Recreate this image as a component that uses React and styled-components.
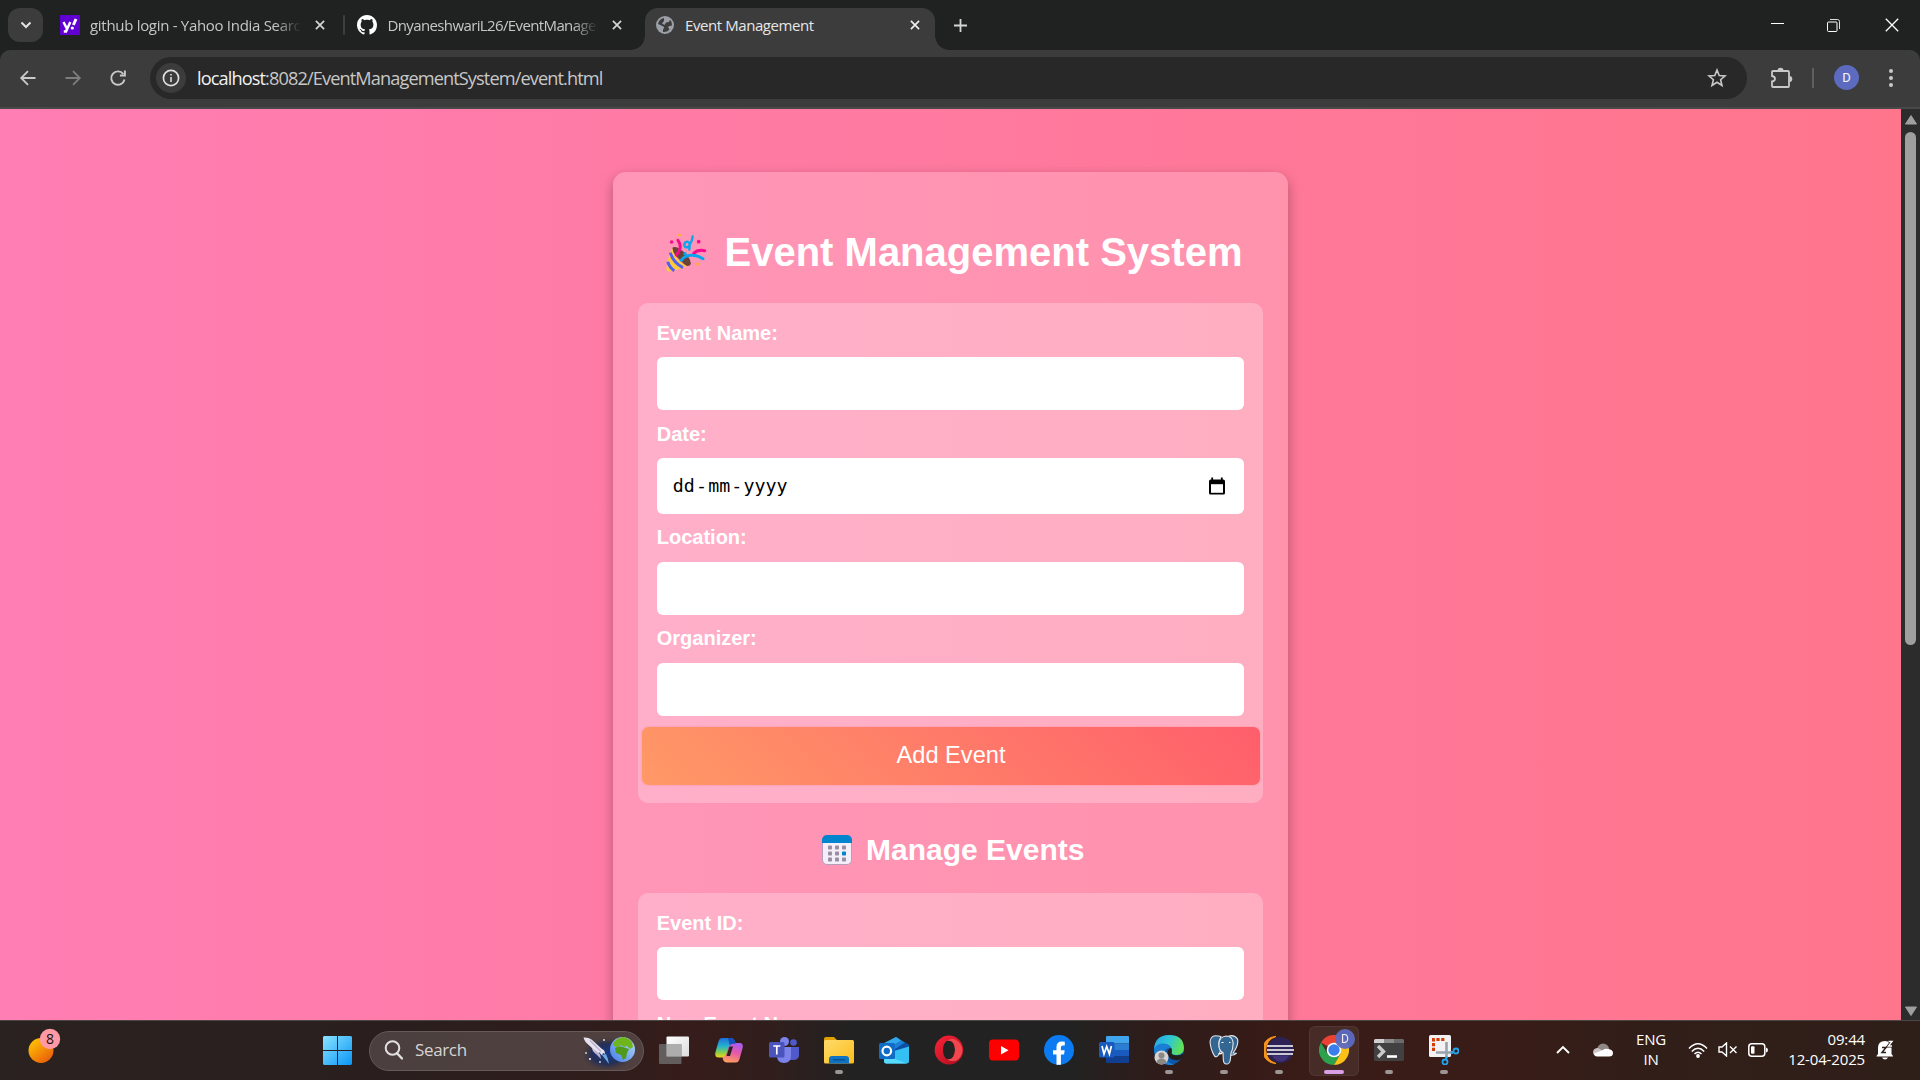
import React from "react";
import styled, { createGlobalStyle } from "styled-components";

const Global = createGlobalStyle`
  *, *::before, *::after { box-sizing: border-box; }
  body { margin: 0; background: #202221; overflow: hidden; }
`;
const ui = `"Open Sans", "Noto Sans", sans-serif`;
const arial = `"Liberation Sans", Arial, sans-serif`;

const Screen = styled.div`
  width: 1920px; height: 1080px; display: flex; flex-direction: column;
  font-family: ${ui}; overflow: hidden; background: #202221;
  svg { display: block; flex: none; }
`;

/* ---------- browser chrome ---------- */
const TabStrip = styled.div`
  height: 50px; flex: none; display: flex; padding-left: 8px; background: #202221;
`;
const TabSearch = styled.div`
  width: 35px; height: 34px; margin-top: 8px; border-radius: 12px; background: #3c3c3c;
  display: grid; place-items: center;
`;
const Tab = styled.div`
  width: ${(p) => p.$w}px; height: 42px; margin: 8px 0 0 ${(p) => p.$ml || 0}px;
  padding: 0 ${(p) => p.$pr || 15}px 8px ${(p) => p.$pl}px; display: flex; align-items: center; position: relative;
  color: ${(p) => (p.$active ? "#e6e6e6" : "#c5c7c6")};
  background: ${(p) => (p.$active ? "#3c3c3c" : "transparent")};
  border-radius: 13px 13px 0 0;
  ${(p) => p.$active && `
    &::before, &::after { content: ""; position: absolute; bottom: 0; width: 14px; height: 14px; }
    &::before { left: -14px; background: radial-gradient(circle at 0 0, transparent 13.5px, #3c3c3c 14px); }
    &::after { right: -14px; background: radial-gradient(circle at 100% 0, transparent 13.5px, #3c3c3c 14px); }
  `}
`;
const TabTitle = styled.span`
  flex: 1; min-width: 0; margin: 0 14px 0 ${(p) => p.$gap}px; font-size: 15px; line-height: 22px;
  letter-spacing: ${(p) => p.$ls}px; white-space: nowrap; overflow: hidden;
  ${(p) => p.$fade && `mask-image: linear-gradient(to right, #000 88%, transparent 100%);`}
`;
const TabDivider = styled.i`
  width: 2px; height: 20px; margin-top: 15px; background: #3d3f3e; border-radius: 1px;
`;
const NewTab = styled.div`
  width: 12px; height: 50px; margin-left: 19px; display: grid; place-items: center;
`;
const WindowButtons = styled.div`
  margin-left: auto; height: 50px; display: flex; align-items: center; gap: 43px; padding-right: 21px;
  svg:last-child { margin-left: 2px; }
`;
const Toolbar = styled.div`
  height: 59px; flex: none; display: flex; align-items: center; padding: 0 20px 2px 18px;
  background: #3c3c3c; border-bottom: 2px solid #494949; border-radius: 10px 10px 0 0;
`;
const NavIcons = styled.div`
  width: 132px; display: flex; gap: 25px;
`;
const Omnibox = styled.div`
  width: 1597px; height: 42px; border-radius: 21px; background: #282828; display: flex; align-items: center;
  padding: 0 20px 0 6px; margin-top: 1px;
`;
const SiteInfo = styled.div`
  width: 30px; height: 30px; border-radius: 50%; background: #3c3c3c; display: grid; place-items: center;
`;
const Url = styled.div`
  flex: 1; margin-left: 11px; font-size: 18.2px; line-height: 28px; letter-spacing: -0.9px; color: #c7c7c7;
  white-space: nowrap;
  b { font-weight: 400; color: #f1f1f1; }
`;
const BarActions = styled.div`
  flex: 1; display: flex; align-items: center; padding-left: 22px;
`;
const BarDivider = styled.i`
  width: 2px; height: 20px; background: #5f5f5f; margin: 0 20px 0 19px;
`;
const Avatar = styled.div`
  width: ${(p) => p.$size}px; height: ${(p) => p.$size}px; border-radius: 50%; background: #5c6bc0;
  color: #f4f5fb; font: ${(p) => p.$fs}px/${(p) => p.$size}px Roboto, sans-serif; text-align: center;
  margin-right: ${(p) => p.$mr || 0}px;
`;

/* ---------- web page ---------- */
const Viewport = styled.div`
  height: 911px; flex: none; display: flex; overflow: hidden;
`;
const Page = styled.main`
  width: 1901px; padding-top: 62.5px; overflow: hidden; font-family: ${arial}; color: #fff;
  background: linear-gradient(to right, #ff7eb3, #ff758c);
`;
const Card = styled.section`
  width: 675px; height: 1400px; margin: 0 auto; padding: 0 25px; border-radius: 12.5px;
  background: rgba(255, 255, 255, 0.2); box-shadow: 0 5px 12.5px rgba(0, 0, 0, 0.3);
`;
const Heading = styled.h1`
  margin: 0; height: ${(p) => p.$h}px; padding-top: ${(p) => p.$pt}px; font-size: ${(p) => p.$fs}px;
  line-height: 1.15; font-weight: 700; display: flex; justify-content: center; white-space: nowrap;
`;
const EmojiSlot = styled.span`
  width: ${(p) => p.$w}px; padding: ${(p) => p.$p};
`;
const Box = styled.form`
  padding: 18.5px 18.75px 18px; border-radius: 10px; background: rgba(255, 255, 255, 0.25);
`;
const Field = styled.div`
  margin-bottom: ${(p) => (p.$last ? 11 : 12.5)}px;
`;
const Label = styled.label`
  display: block; height: 23px; margin: ${(p) => (p.$raised ? "-1px 0 13.5px" : "0 0 12.5px")};
  font-size: 20px; line-height: 23px; font-weight: 700;
`;
const FieldBody = styled.div`
  display: flow-root;
`;
const Input = styled.div`
  height: ${(p) => p.$h || 53}px; border-radius: 6px; background: #fff; color: #000; display: flex;
  align-items: center; padding: 0 18px 0 16px; font: 18.3px/24px "DejaVu Sans Mono", monospace;
`;
const Segment = styled.span`
  padding: 0 0.6px 0 ${(p) => (p.$first ? 0 : 0.6)}px;
  &:last-of-type { margin-right: auto; }
`;
const AddButton = styled.div`
  height: 58px; margin: 0 -15px; border-radius: 6.5px; color: #fff; font-size: 23.6px; line-height: 56px;
  text-align: center; background: linear-gradient(45deg, #ff9966, #ff5e6c);
  box-shadow: 0 0 2px rgba(255, 110, 110, 0.5);
  margin: 0 -15.4px 0 -14.4px;
`;
const Scrollbar = styled.div`
  width: 19px; background: #2c2c2c; display: flex; flex-direction: column; align-items: center;
  padding: 6px 0 4px;
`;
const Thumb = styled.div`
  width: 11px; height: 513px; margin: 7px 0 auto; border-radius: 6px; background: #9f9f9f;
`;

/* ---------- taskbar ---------- */
const Taskbar = styled.footer`
  height: 60px; flex: none; display: flex; align-items: center; border-top: 1px solid #4c4644; color: #fff;
  background: linear-gradient(to right, #2a2220 0, #2a1f1e 400px, #2f1d1c 600px, #361c1a 690px, #301e1c 770px,
    #232222 850px, #222 1070px, #2e1c1a 1150px, #391b17 1300px, #391c17 1500px, #311e19 1640px, #2f1f19 1920px);
`;
const Weather = styled.div`
  width: 323px; padding: 0 0 2px 28px;
`;
const SearchBox = styled.div`
  width: 275px; height: 40px; margin: 0 2.5px 0 17px; border-radius: 20px; display: flex; align-items: center;
  padding: 0 7px 1px 14px; border: 1px solid #65595a; background: linear-gradient(to right, #4b403f, #50403f);
`;
const SearchText = styled.span`
  flex: 1; margin-left: 12px; font-size: 17px; line-height: 24px; letter-spacing: -0.35px; color: #d8d4d4;
`;
const AppSlot = styled.div`
  width: 55px; height: 59px; display: grid; place-items: center; grid-template-areas: "a";
  & > * { grid-area: a; }
  & > svg { margin-bottom: 1px; }
`;
const ActiveTile = styled.div`
  width: 50px; height: 50px; border-radius: 6px; background: rgba(255, 255, 255, 0.07);
  border: 1px solid rgba(255, 255, 255, 0.06);
`;
const Mark = styled.i`
  align-self: end; margin-bottom: 6px; width: ${(p) => (p.$on ? 20 : 8)}px; height: 4px; border-radius: 2px;
  background: ${(p) => (p.$on ? "#d99fe6" : "#9c9594")};
`;
const Badge = styled.div`
  align-self: start; margin: 8px 0 0 22px;
  & > div { opacity: 0.95; }
`;
const Tray = styled.div`
  flex: 1; display: flex; align-items: center; padding: 0 0 2px 84.5px;
`;
const TrayText = styled.div`
  width: ${(p) => p.$w}px; margin-left: ${(p) => p.$ml}px; font-size: 15px; line-height: 20px;
  letter-spacing: ${(p) => p.$ls}px; text-align: ${(p) => p.$align}; white-space: nowrap; padding-bottom: 2px;
`;
const Slot = styled.div`
  margin-left: ${(p) => p.$ml}px;
`;

const Svg = ({ w, h = w, vb, children, ...r }) => (
  <svg width={w} height={h} viewBox={vb || `0 0 ${w} ${h}`} fill="none" {...r}>{children}</svg>
);
const X = ({ c = "#d5d5d5" }) => (
  <Svg w={10}><path d="M.9.9l8.2 8.2M9.1.9L.9 9.1" stroke={c} strokeWidth="1.7" /></Svg>
);

const Popper = () => (
  <Svg w={42} h={40} vb="30 38 126 120">
    <path d="M52 82Q62 76 80 90Q104 106 108 130Q104 140 92 136L54 98Z" fill="#6b4236" />
    <path d="M51 83Q36 118 34 146Q35 156 46 153Q72 150 96 137Q62 122 51 83Z" fill="#ffc83d" />
    <path d="M46 97Q54 126 84 142M38 124Q44 142 58 151" stroke="#4f62ef" strokeWidth="9" />
    <path d="M69 60Q80 76 73 90Q70 96 64 104" stroke="#f70a8d" strokeWidth="9" strokeLinecap="round" />
    <path d="M116 99Q128 87 149 91" stroke="#f70a8d" strokeWidth="9" strokeLinecap="round" />
    <path d="M79 120Q88 106 106 105Q124 103 144 115" stroke="#0aa5ef" strokeWidth="9" strokeLinecap="round" />
    <path d="M113 48Q112 62 103 76Q98 84 90 79Q85 72 91 66Q98 61 103 68Q105 74 103 88" stroke="#0aa5ef" strokeWidth="7" strokeLinecap="round" />
    <circle cx="50" cy="65" r="5.500" fill="#f70a8d" /><circle cx="131" cy="64" r="5.500" fill="#f70a8d" />
    <circle cx="73" cy="44" r="4.500" fill="#ffb02e" /><circle cx="128" cy="131" r="4.500" fill="#ffb02e" />
    <circle cx="90" cy="100" r="5" fill="#0aa5ef" />
  </Svg>
);
const Calendar = () => (
  <Svg w={30}>
    <rect x=".5" y=".5" width="29" height="29" rx="4.5" fill="#f3eef8" stroke="#b59dbd" />
    <path d="M0 8V5a5 5 0 0 1 5-5h20a5 5 0 0 1 5 5v3z" fill="#0084ce" />
    {[10.5, 16.5, 22.5].map((y) => [6, 13, 20].map((x) => (
      <rect key={x + "-" + y} x={x} y={y} width="4" height="4" rx=".8" fill={x === 20 && y === 16.5 ? "#0084ce" : "#998ea3"} />
    )))}
  </Svg>
);

const TaskView = () => (
  <Svg w={30}>
    <rect x="7.5" y="1.500" width="22.500" height="20" rx="1" fill="url(#tv1)" />
    <rect x="0" y="9" width="22.500" height="20" rx="1" fill="#6f6f6f" fillOpacity=".8" />
    <path d="M7.500 9h15v12.500h-15z" fill="#adadad" />
    <defs><linearGradient id="tv1" x1="0" y1="0" x2="1" y2="1"><stop stopColor="#fff" /><stop offset="1" stopColor="#dcdcdc" /></linearGradient></defs>
  </Svg>
);
const Copilot = () => (
  <Svg w={30}>
    <defs>
      <linearGradient id="cp1" x1="0" y1="0" x2="0" y2="1"><stop stopColor="#1b6fe0" /><stop offset=".45" stopColor="#28b6c8" /><stop offset=".75" stopColor="#8ccf45" /><stop offset="1" stopColor="#f5d31c" /></linearGradient>
      <linearGradient id="cp2" x1=".6" y1="0" x2=".3" y2="1"><stop stopColor="#a95cf0" /><stop offset=".45" stopColor="#e658a8" /><stop offset="1" stopColor="#ffa05c" /></linearGradient>
    </defs>
    <path d="M8 3h9q3 0 4 3.500l.8 2.500h-3q-3 0-4 3.500L12.500 19q-1 3.500-4 3.500H5Q0 22.500 1.500 17L4.500 6.500Q5.500 3 8 3z" fill="url(#cp1)" />
    <path d="M22 27.500h-9q-3 0-4-3L8.500 22q3 0 4-3.500l2.500-7.500q1-3 4-3h6.500q4.500 0 3 5.500L25.500 24q-1 3.500-3.500 3.500z" fill="url(#cp2)" />
    <path d="M17 3q3 0 4 3.500l.8 2.300h-3q-2 0-3 1.600L14 3z" fill="#1650b8" />
    <path d="M15.500 11.500h3.500l-3 9.500h-3.500z" fill="#2b2020" />
  </Svg>
);
const Teams = () => (
  <Svg w={30}>
    <circle cx="24.500" cy="7.500" r="3.300" fill="#5059c9" /><path d="M20 12h10v8q0 5-6 5h-4z" fill="#5059c9" />
    <circle cx="15.500" cy="6.500" r="4.500" fill="#7b83eb" /><path d="M8 12h14v9q0 7-7 7t-7-7z" fill="#7b83eb" />
    <rect y="7" width="15.500" height="15.500" rx="1.500" fill="#4b53bc" />
    <path d="M4.300 11h7M7.800 11v8.500" stroke="#fff" strokeWidth="1.700" />
  </Svg>
);
const Folder = () => (
  <Svg w={30}>
    <path d="M0 4q0-2 2-2h8l3 3h5v5H0z" fill="#e0a100" />
    <rect y="5" width="30" height="23.500" rx="1.500" fill="url(#fo)" />
    <path d="M5 28.500V24q0-3 3-3h14q3 0 3 3v4.500z" fill="#0f73c4" /><path d="M9 24.800h12" stroke="#0a4c8c" strokeWidth="1.300" />
    <defs><linearGradient id="fo" x1="0" y1="0" x2="1" y2="1"><stop stopColor="#ffdb6b" /><stop offset="1" stopColor="#fbbc1b" /></linearGradient></defs>
  </Svg>
);
const Outlook = () => (
  <Svg w={30}>
    <path d="M5 9L17 2l13 8-13 9z" fill="#1c7fd6" /><path d="M5 8l12-6 5 3.500L9 13z" fill="#31a8ec" />
    <path d="M13 16l13-8.500 4 2.500v4L17 21z" fill="#0c4fa3" />
    <path d="M5 19l25-7.500V26q0 2.500-2.500 2.500h-20Q5 28.500 5 26z" fill="#35c0f3" /><path d="M5 20l23 8.500H7Q5 28 5 26z" fill="#58dcfb" />
    <rect y="8" width="16" height="16" rx="1.500" fill="#0f6cc7" /><circle cx="7.800" cy="16" r="4.300" stroke="#fff" strokeWidth="2.200" />
  </Svg>
);
const Opera = () => (
  <Svg w={30}>
    <defs><linearGradient id="op" x1="0" y1="0" x2="1" y2="1"><stop stopColor="#ff2338" /><stop offset="1" stopColor="#a40d1d" /></linearGradient></defs>
    <path fillRule="evenodd" d="M15 .5a14.300 14.500 0 1 0 0 29a14.300 14.500 0 1 0 0-29zM15 5.500c4 0 6 4.500 6 9.500s-2 9.500-6 9.500-6-4.500-6-9.500 2-9.500 6-9.500z" fill="url(#op)" />
    <path d="M13 5.900Q18 2 23 5.500Q29 10 28.500 16Q27.500 23 22.500 25.500Q17 27.500 13 24.200Q20 25.500 21 15Q20.500 4.500 13 5.900z" fill="#f2464e" />
  </Svg>
);
const YouTube = () => (
  <Svg w={30}><rect y="4.500" width="30" height="21" rx="4" fill="#f00" /><path d="M12 11v8.500l7.500-4.250z" fill="#fff" /></Svg>
);
const Facebook = () => (
  <Svg w={30}>
    <circle cx="15" cy="15" r="15" fill="#0c7bf2" />
    <path d="M12.500 29.800V19.500H9V15.200h3.500V12q0-5.500 5.300-5.500l3 .3v3.700h-1.900q-2 0-2 2v2.700h3.800l-.7 4.300h-3.100v10.300z" fill="#fff" />
  </Svg>
);
const Word = () => (
  <Svg w={30}>
    <path d="M7 2q0-1 1-1h21q1 0 1 1v6.500H7z" fill="#41a5ee" /><path d="M7 8.500h23V15H7z" fill="#2b7cd3" />
    <path d="M7 15h23v6.500H7z" fill="#185abd" /><path d="M7 21.500h23V27q0 1-1 1H8q-1 0-1-1z" fill="#103f91" />
    <rect y="7" width="15.500" height="15.500" rx="1.500" fill="#185abd" />
    <path d="M3 11l2 8 2.700-7.500L10.400 19l2-8" stroke="#fff" strokeWidth="1.700" />
  </Svg>
);
const Edge = () => (
  <Svg w={30}>
    <defs>
      <linearGradient id="ed" x1="0" y1="0" x2="1" y2=".3"><stop stopColor="#24a0e6" /><stop offset=".55" stopColor="#2fc7d4" /><stop offset="1" stopColor="#5fe05a" /></linearGradient>
    </defs>
    <circle cx="15" cy="15" r="15" fill="#0d57a8" />
    <path d="M0 14Q1 0 15 0q14.500 0 15 13 0 6.500-7.500 7-6 0-4.500-3.500Q18 9 10 9 4 9 0 14z" fill="url(#ed)" />
    <path d="M0 14Q3 8 10 8.500q5 .5 7 4.500-6-1-6.500 6 .5 8 10 11Q14 31 7 27 0 22 0 14z" fill="#1a7fd4" />
    <path d="M17.500 16.500q-1 4 5 4 5 0 7-2.500v3q-2 3-5 4-8 1-11-5-.5-5 3-7 2 1 1 3.500z" fill="#231d1c" />
    <circle cx="7.500" cy="22.500" r="7" fill="#d5d3d1" /><circle cx="7.500" cy="20.500" r="3" fill="#8b8785" /><path d="M2.500 27q1-3.500 5-3.500t5 3.500q-2 2.500-5 2.500t-5-2.500z" fill="#8b8785" />
  </Svg>
);
const Postgres = () => (
  <Svg w={30}>
    <g fill="#336791" stroke="#e4e6ea" strokeWidth="1.100" strokeLinejoin="round">
      <path d="M9 1Q2-.5 1 6.500q.5 8 4.500 14.500 2 2 4-1l2-4Q8 8 12 1.500 10.500.8 9 1z" />
      <path d="M19 1.500Q25-1 28.500 4q1.500 6-4.500 14l3.500.2q-2 2.300-6 2z" />
      <path d="M10 9q0-7 7-8 6 0 7 6 .5 6-2 11l-.7 7q-1 4.500-4 4-2.700 0-3-4.500l-.3-7q-4.500-2-4-8.500z" />
    </g>
    <path d="M12.500 7.500h2M20 7.500h1.500M9.500 18.500q2 1 4-1" stroke="#fff" strokeWidth="1.200" />
  </Svg>
);
const Eclipse = () => (
  <Svg w={30}>
    <path d="M12 1.500A14 14 0 0 0 12 28.500A13.500 13.500 0 0 1 12 1.500z" fill="#f7941e" stroke="#f7941e" strokeWidth="1" />
    <circle cx="16.500" cy="15" r="13" fill="#2c2255" />
    <path d="M8 20.500h17q-3 6-8.500 6T8 20.500z" fill="#41327a" />
    <path d="M3 11h26M3 15h27M3 19h26" stroke="#fff" strokeWidth="1.700" />
  </Svg>
);
const Chrome = () => (
  <Svg w={30}>
    <path d="M15 15L2 7.500A15 15 0 0 1 28 7.500H15z" fill="#ea4335" />
    <path d="M15 15L21.500 18.750 15 30A15 15 0 0 1 2 7.500L8.500 18.750z" fill="#2da14c" />
    <path d="M15 7.500H28A15 15 0 0 1 15 30L21.500 18.750z" fill="#fbc116" />
    <circle cx="15" cy="15" r="7.300" fill="#fff" /><circle cx="15" cy="15" r="5.700" fill="#3b7ded" />
  </Svg>
);
const Terminal = () => (
  <Svg w={30}>
    <rect y="4" width="30" height="22" rx="1.500" fill="#414141" /><path d="M0 5.500Q0 4 1.500 4H10v4H0z" fill="#d0d0d0" />
    <path d="M10 4h10v4H10z" fill="#8c8c8c" /><path d="M20 4h8.500Q30 4 30 5.500V8H20z" fill="#6b6b6b" />
    <path d="M4 11l5.500 5.500L4 22" stroke="#c9c9c9" strokeWidth="3.400" /><path d="M13 21.500h10" stroke="#fff" strokeWidth="2.600" />
  </Svg>
);
const Snip = () => (
  <Svg w={30}>
    <rect width="22" height="22" rx="1.500" fill="#f2f2f4" />
    <path d="M4.500 16V4.500H16" stroke="#d83b01" strokeWidth="3" strokeDasharray="3.200 1.600" />
    <path d="M17.500 7v16M7 17.500h17" stroke="#9aa3ab" strokeWidth="2.600" />
    <circle cx="27" cy="16" r="2.500" stroke="#20a4ee" strokeWidth="1.800" /><circle cx="16" cy="27" r="2.500" stroke="#20a4ee" strokeWidth="1.800" />
    <path d="M24.500 17l-3 .8M17 24.500l.8-3" stroke="#20a4ee" strokeWidth="2" />
  </Svg>
);

const apps = [
  [TaskView], [Copilot], [Teams], [Folder, 1], [Outlook], [Opera], [YouTube], [Facebook], [Word],
  [Edge, 1], [Postgres, 1], [Eclipse, 1], [Chrome, 2], [Terminal, 1], [Snip, 1],
];

function FormField({ label, last, date, raised }) {
  return (
    <Field $last={last}>
      <Label $raised={raised}>{label}</Label>
      <FieldBody>
        <Input $h={date ? 56 : 53}>
          {date && (
            <>
              {["dd", "-", "mm", "-", "yyyy"].map((t, i) => <Segment key={i} $first={i === 0}>{t}</Segment>)}
              <Svg w={18}><path d="M1 4.300q0-1.800 1.800-1.800h12.400Q17 2.500 17 4.300V16q0 1.500-1.500 1.500h-13Q1 17.500 1 16z" fill="#000" /><path d="M3 7.200h12v8.600H3z" fill="#fff" /><path d="M4.200.5V4M13.800.5V4" stroke="#000" strokeWidth="1.800" /></Svg>
            </>
          )}
        </Input>
      </FieldBody>
    </Field>
  );
}

export default function App() {
  return (
    <Screen>
      <Global />
      <TabStrip>
        <TabSearch><Svg w={12} h={8}><path d="M1.500 1.500L6 6l4.500-4.500" stroke="#e3e3e3" strokeWidth="2" /></Svg></TabSearch>
        <Tab $w={300} $pl={17} $pr={18}>
          <Svg w={20}>
            <rect width="20" height="20" fill="#6001d2" />
            <path d="M3.500 7l3.300 6.500M10.300 7L6 16.500H3.800" stroke="#fff" strokeWidth="2.500" /><path d="M16 4l-2.600 6" stroke="#fff" strokeWidth="2.900" /><circle cx="12.300" cy="13" r="1.600" fill="#fff" />
          </Svg>
          <TabTitle $gap={10} $ls={-0.3} $fade>github login - Yahoo India Search</TabTitle><X />
        </Tab>
        <TabDivider />
        <Tab $w={292} $pl={12}>
          <Svg w={20} vb="0 0 16 16"><path fill="#fff" d="M8 0C3.580 0 0 3.580 0 8c0 3.540 2.290 6.530 5.470 7.590.4.070.55-.17.55-.38 0-.19-.01-.82-.01-1.490-2.010.37-2.530-.49-2.690-.94-.09-.23-.48-.94-.82-1.130-.28-.15-.68-.52-.01-.53.63-.01 1.080.58 1.230.82.72 1.210 1.870.87 2.330.66.07-.52.28-.87.51-1.070-1.780-.2-3.640-.89-3.640-3.950 0-.87.31-1.590.82-2.150-.08-.2-.36-1.020.08-2.120 0 0 .67-.21 2.200.82.64-.18 1.320-.27 2-.27s1.360.09 2 .27c1.530-1.040 2.200-.82 2.200-.82.44 1.100.16 1.920.08 2.120.51.56.82 1.270.82 2.150 0 3.070-1.870 3.750-3.650 3.950.29.25.54.73.54 1.480 0 1.070-.01 1.930-.01 2.200 0 .21.15.46.55.38A8.010 8.010 0 0 0 16 8c0-4.420-3.580-8-8-8z" /></Svg>
          <TabTitle $gap={10.5} $ls={-0.62} $fade>DnyaneshwariL26/EventManagement</TabTitle><X />
        </Tab>
        <Tab $w={290} $ml={8} $pl={11} $active>
          <Svg w={18}>
            <circle cx="9" cy="9" r="9" fill="#9aa0a6" />
            <path d="M8 2q-5 1-6 6 3 1 5.500 2.500Q9 12 7 13.500v2.500q4 .5 6.500-2.500L12 11q1-1.500 4-1.500Q16.500 6 14 3.800L13 6 10 6.500 8.500 9 6 7.500 8 5z" fill="#3c3c3c" />
          </Svg>
          <TabTitle $gap={11} $ls={-0.42}>Event Management</TabTitle><X c="#eee" />
        </Tab>
        <NewTab><Svg w={13}><path d="M6.500 0v13M0 6.500h13" stroke="#d5d5d5" strokeWidth="1.800" /></Svg></NewTab>
        <WindowButtons>
          <Svg w={13}><path d="M0 4.500h13" stroke="#fff" /></Svg>
          <Svg w={13}><rect x=".5" y="3" width="9.500" height="9.500" rx="1" stroke="#fff" /><path d="M3 .5h7.500q2 0 2 2V10" stroke="#ddd" /></Svg>
          <Svg w={14}><path d="M.8.8l12.400 12.400M13.200.8L.8 13.200" stroke="#fff" strokeWidth="1.300" /></Svg>
        </WindowButtons>
      </TabStrip>

      <Toolbar>
        <NavIcons>
          <Svg w={20}><path d="M17.500 10H3.500M10 3.200L3.200 10l6.800 6.800" stroke="#c9c9c9" strokeWidth="1.800" /></Svg>
          <Svg w={20}><path d="M2.500 10h14M10 3.200l6.800 6.800-6.800 6.800" stroke="#7d7d7d" strokeWidth="1.800" /></Svg>
          <Svg w={20}><path d="M16.500 11.500A6.700 6.700 0 1 1 15.300 6M16.900 2.500v5h-5" stroke="#c9c9c9" strokeWidth="1.900" /></Svg>
        </NavIcons>
        <Omnibox>
          <SiteInfo><Svg w={18}><circle cx="9" cy="9" r="7.600" stroke="#dedede" strokeWidth="1.700" /><path d="M9 8v5M9 5v1.600" stroke="#dedede" strokeWidth="1.600" /></Svg></SiteInfo>
          <Url><b>localhost</b>:8082/EventManagementSystem/event.html</Url>
          <Svg w={20}><path d="M10 2l2.200 5.500 5.900.4-4.500 3.800 1.400 5.800L10 14.300l-5 3.200 1.400-5.800L1.900 7.900l5.900-.4z" stroke="#c9c9c9" strokeWidth="1.600" /></Svg>
        </Omnibox>
        <BarActions>
          <Svg w={24}><path d="M4 5h15q1 0 1 1v14q0 1-1 1H4q-1 0-1-1v-4.500q3-.5 3-2.700T3 10V6q0-1 1-1z" stroke="#c9c9c9" strokeWidth="1.800" /><path d="M8.500 4.500a3 2.800 0 0 1 6 0zM20.500 10a2.800 3 0 0 1 0 6z" fill="#c9c9c9" /></Svg>
          <BarDivider />
          <Avatar $size={25} $fs={13} $mr={30}>D</Avatar>
          <Svg w={4} h={18}><circle cx="2" cy="2" r="2" fill="#c9c9c9" /><circle cx="2" cy="9" r="2" fill="#c9c9c9" /><circle cx="2" cy="16" r="2" fill="#c9c9c9" /></Svg>
        </BarActions>
      </Toolbar>

      <Viewport>
        <Page>
          <Card>
            <Heading $h={131.500} $pt={57} $fs={40}>
              <EmojiSlot $w={66} $p="4px 0 0 6px"><Popper /></EmojiSlot>
              Event Management System
            </Heading>
            <Box as="div">
              <FormField label="Event Name:" />
              <FormField label="Date:" date />
              <FormField label="Location:" raised />
              <FormField label="Organizer:" raised last />
              <AddButton>Add Event</AddButton>
            </Box>
            <Heading as="h2" $h={90} $pt={30} $fs={30}>
              <EmojiSlot $w={49.500} $p="1.500px 0 0 5px"><Calendar /></EmojiSlot>
              Manage Events
            </Heading>
            <Box as="div">
              <FormField label="Event ID:" />
              <FormField label="New Event Name:" />
            </Box>
          </Card>
        </Page>
        <Scrollbar>
          <Svg w={12} h={10}><path d="M6 .5l5.500 8.500H.5z" fill="#9f9f9f" stroke="#9f9f9f" strokeLinejoin="round" /></Svg>
          <Thumb />
          <Svg w={12} h={10}><path d="M6 9.500L.5 1h11z" fill="#9f9f9f" stroke="#9f9f9f" strokeLinejoin="round" /></Svg>
        </Scrollbar>
      </Viewport>

      <Taskbar>
        <Weather>
          <Svg w={34} h={44}>
            <defs><linearGradient id="sun" x1=".1" y1=".1" x2=".8" y2="1"><stop stopColor="#ffc400" /><stop offset="1" stopColor="#e8590c" /></linearGradient></defs>
            <circle cx="13" cy="22.500" r="12.500" fill="url(#sun)" /><circle cx="22" cy="11" r="10.200" fill="#ff99a4" />
            <text x="22" y="16" textAnchor="middle" fontFamily="Open Sans, sans-serif" fontSize="14" fill="#1a1010">8</text>
          </Svg>
        </Weather>
        <Svg w={29}>
          <defs><linearGradient id="win" x1="0" y1="0" x2="1" y2="1"><stop stopColor="#8ae4ff" /><stop offset="1" stopColor="#0a95f5" /></linearGradient></defs>
          <path d="M1 0h13v14H0V1zM15 0h13l1 1v13H15zM0 15h14v14H1l-1-1zM15 15h14v13l-1 1H15z" fill="url(#win)" />
        </Svg>
        <SearchBox>
          <Svg w={19} h={20}><circle cx="8.500" cy="8" r="6.800" stroke="#e3e0e0" strokeWidth="2" /><path d="M13 13.200l5 5.300" stroke="#e3e0e0" strokeWidth="2.400" strokeLinecap="round" /></Svg>
          <SearchText>Search</SearchText>
          <Svg w={56} h={38}>
            <defs><radialGradient id="sky"><stop stopColor="#143a86" /><stop offset=".6" stopColor="#1a2b5c" stopOpacity=".8" /><stop offset="1" stopColor="#40353c" stopOpacity="0" /></radialGradient>
              <linearGradient id="globe" x1="1" y1="0" x2="0" y2="1"><stop stopColor="#b8e0fb" /><stop offset="1" stopColor="#4479e8" /></linearGradient></defs>
            <ellipse cx="27" cy="23" rx="26" ry="17" fill="url(#sky)" />
            <path d="M22 24l7 9q-1-6-3-10z" fill="#6ea7dd" />
            <path d="M3.500 6.500q4.500-.5 8 2L22 18q3 1 3 5l-2-1-1 2.500-2.500-3L16 23l-3-3-1-3-6-5.500q-2-2.500-2.500-5z" fill="#e6e1ef" />
            <path d="M12 17l4 6 5 5-1-5z" fill="#bab0cc" /><path d="M10 9.500l11 11" stroke="#b7aecb" strokeWidth="1.300" />
            <circle cx="42.500" cy="18.500" r="12.500" fill="url(#globe)" />
            <path d="M33 12q5-6 10-6 5 .5 9 5l1 5-3 2-3-3-3 1-3-2-3 2-5-1z" fill="#6fb51c" />
            <path d="M35 17q5-2.500 9-.5l5 1.500-2 4-1 5-3 2-2-5-5-2z" fill="#4f9a18" />
            <circle cx="24" cy="9" r="1" fill="#ddd" /><circle cx="6" cy="22" r=".9" fill="#ddd" /><circle cx="10" cy="28" r="1.100" fill="#eee" /><circle cx="20" cy="31" r=".9" fill="#ddd" />
          </Svg>
        </SearchBox>
        {apps.map(([Icon, state], i) => (
          <AppSlot key={i}>
            {state === 2 && <ActiveTile />}
            <Icon />
            {state === 2 && <Badge><Avatar $size={20} $fs={12}>D</Avatar></Badge>}
            {state && <Mark $on={state === 2} />}
          </AppSlot>
        ))}
        <Tray>
          <Svg w={14} h={9}><path d="M1 8l6-6 6 6" stroke="#fff" strokeWidth="1.900" /></Svg>
          <Slot $ml={23}><Svg w={20} h={14}><path d="M4 9q-.5-8 6-8.500 5 0 6.500 6L9 10z" fill="#8f8886" /><path d="M0 9q.5-4 5-4l9 5-9 3Q0 13 0 9z" fill="#c9c6c5" /><path d="M4 13.500q-3-.5-3-3l9-3.500q2-2 5-1 5 .5 5 4 0 3.500-4 3.500z" fill="#fff" /></Svg></Slot>
          <TrayText $w={40} $ml={18} $ls={-0.200} $align="center">ENG<br />IN</TrayText>
          <Slot $ml={17}><Svg w={20} h={16}><path d="M1 6.500q9-9.500 18 0M3.800 9.500q6.200-6.500 12.400 0M6.500 12q3.500-3.500 7 0" stroke="#fff" strokeWidth="1.500" /><circle cx="10" cy="14" r="1.900" fill="#fff" /></Svg></Slot>
          <Slot $ml={10}><Svg w={20} h={15}><path d="M1 5h3l4.500-4v13L4 10H1zM12 4.500l6.500 6.500M18.500 4.500L12 11" stroke="#fff" strokeWidth="1.400" /></Svg></Slot>
          <Slot $ml={10}><Svg w={20} h={14}><rect x=".8" y=".8" width="16" height="12.400" rx="3" stroke="#fff" strokeWidth="1.500" /><rect x="3" y="3.200" width="3.500" height="7.600" rx="1" fill="#fff" /><path d="M18 4.500q2 .5 2 2.500t-2 2.500z" fill="#fff" /></Svg></Slot>
          <TrayText $w={90} $ml={7} $ls={-0.150} $align="right">09:44<br />12-04-2025</TrayText>
          <Slot $ml={11}><Svg w={18} h={20}><path d="M2 14V8q0-7 7-7 6 0 6.500 6v7l1.500 2v.5H.5V16zM6 17.500h6q-1 2-3 2t-3-2z" fill="#fff" /><path d="M6 7.500h4L6 12.500h4" stroke="#2f1f19" strokeWidth="1.500" /><path d="M12.500 1.500H16l-3.500 4.500H16" stroke="#2f1f19" strokeWidth="3" /><path d="M12.500 1.500H16l-3.500 4.500H16" stroke="#fff" strokeWidth="1.400" /></Svg></Slot>
        </Tray>
      </Taskbar>
    </Screen>
  );
}
